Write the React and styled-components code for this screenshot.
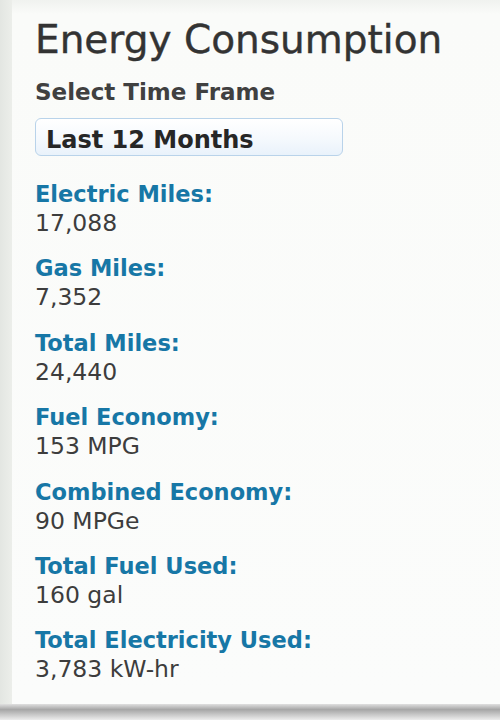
import styled, { createGlobalStyle } from "styled-components";

const GlobalStyle = createGlobalStyle`
    html, body {
        margin: 0;
        padding: 0;
        background: #e8ebe7;
    }
    * {
        box-sizing: border-box;
    }
`;

const stats = [
    { label: "Electric Miles:", value: "17,088" },
    { label: "Gas Miles:", value: "7,352" },
    { label: "Total Miles:", value: "24,440" },
    { label: "Fuel Economy:", value: "153 MPG" },
    { label: "Combined Economy:", value: "90 MPGe" },
    { label: "Total Fuel Used:", value: "160 gal" },
    { label: "Total Electricity Used:", value: "3,783 kW-hr" },
];

function App() {
    return (
        <>
            <GlobalStyle />
            <Page>
                <Panel>
                    <Title>Energy Consumption</Title>
                    <SubTitle>Select Time Frame</SubTitle>
                    <Select>Last 12 Months</Select>
                    <StatList>
                        {stats.map((s) => (
                            <Stat key={s.label}>
                                <Label>{s.label}</Label>
                                <Value>{s.value}</Value>
                            </Stat>
                        ))}
                    </StatList>
                </Panel>
                <BottomBar />
            </Page>
        </>
    );
}

export default App;

const Page = styled.div`
    width: 500px;
    height: 720px;
    display: flex;
    flex-direction: column;
    background: linear-gradient(90deg, #e3e6e2 0px, #eceeea 12px);
    font-family: "DejaVu Sans", "Liberation Sans", sans-serif;
`;

const Panel = styled.div`
    flex: 1;
    margin-left: 12px;
    padding: 18px 0 0 23px;
    background: linear-gradient(180deg, #f0f2ef 0px, #fafbf9 14px, #fbfcfb 100%);
    display: flex;
    flex-direction: column;
`;

const Title = styled.h1`
    margin: 0;
    font-size: 39px;
    font-weight: normal;
    color: #333;
    line-height: 44px;
    -webkit-text-stroke: 0.4px #333;
`;

const SubTitle = styled.h2`
    margin: 16px 0 0;
    font-size: 23px;
    font-weight: bold;
    color: #404040;
    line-height: 28px;
`;

const Select = styled.div`
    margin-top: 12px;
    width: 308px;
    height: 38px;
    padding: 7px 0 0 10px;
    border: 1px solid #b9d3ea;
    border-radius: 6px;
    background: linear-gradient(180deg, #ffffff 0%, #f5f9fd 55%, #e9f2fb 100%);
    font-size: 24px;
    font-weight: bold;
    color: #262626;
    line-height: 29px;
`;

const StatList = styled.div`
    margin-top: 25px;
    display: flex;
    flex-direction: column;
    gap: 16.4px;
`;

const Stat = styled.div`
    display: flex;
    flex-direction: column;
`;

const Label = styled.div`
    font-size: 22.5px;
    font-weight: bold;
    color: #1777a6;
    line-height: 26px;
`;

const Value = styled.div`
    font-size: 23.5px;
    color: #3d3d3d;
    line-height: 32px;
`;

const BottomBar = styled.div`
    height: 16px;
    background: linear-gradient(180deg, #e0e0e0 0%, #a6a6a6 35%, #cccccc 70%, #ededed 100%);
`;
